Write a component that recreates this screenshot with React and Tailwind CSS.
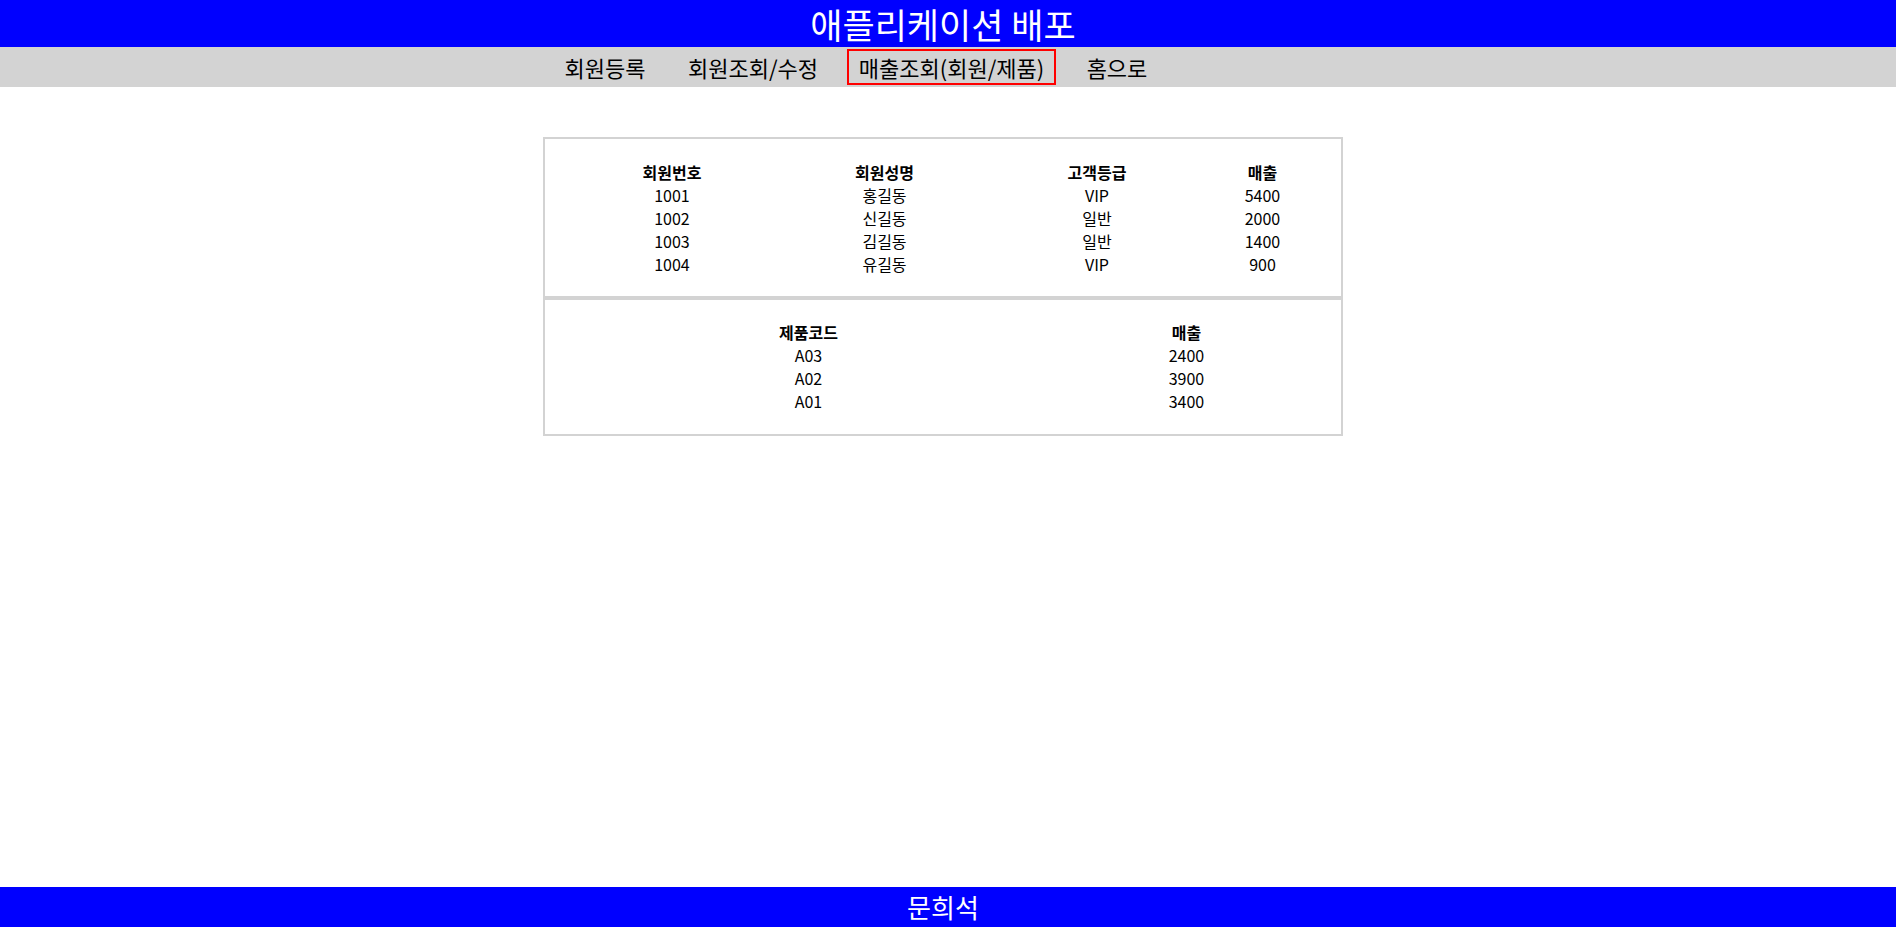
const NAV = [
  { label: '회원등록', w: 'w-[108px]' },
  { label: '회원조회/수정', w: 'w-[188px]' },
  { label: '매출조회(회원/제품)', w: 'w-[209px]', active: true },
  { label: '홈으로', w: 'w-[122px]' }
]

const MEMBER_SALES = [
  { id: '1001', name: '홍길동', grade: 'VIP', sales: '5400' },
  { id: '1002', name: '신길동', grade: '일반', sales: '2000' },
  { id: '1003', name: '김길동', grade: '일반', sales: '1400' },
  { id: '1004', name: '유길동', grade: 'VIP', sales: '900' }
]

const PRODUCT_SALES = [
  { code: 'A03', sales: '2400' },
  { code: 'A02', sales: '3900' },
  { code: 'A01', sales: '3400' }
]

const MEMBER_COLS = 'grid grid-cols-[214px_211px_214px_117px]'
const PRODUCT_COLS = 'grid grid-cols-[487px_269px]'

export default function App() {
  return (
    <div className="h-screen flex flex-col bg-white text-black font-['Noto_Sans_CJK_KR','Noto_Sans',sans-serif]">
      {/* Header */}
      <header className="h-[47px] flex items-center justify-center pr-[10px] bg-[#0000ff] text-white text-[35px] leading-none">
        애플리케이션 배포
      </header>

      {/* Nav */}
      <nav className="h-[40px] flex items-center justify-center pr-[167px] bg-[#d3d3d3] text-[22px] leading-none">
        {NAV.map((item) => (
          <a
            key={item.label}
            className={`h-[36px] flex items-center justify-center ${item.w} ${
              item.active ? 'border-2 border-[#ff0000]' : 'border-2 border-transparent'
            }`}
          >
            {item.label}
          </a>
        ))}
      </nav>

      {/* Sales tables */}
      <main className="flex justify-center pr-[10px] pt-[50px]">
        <section className="w-[800px] text-[16px] leading-none">
          <div className="border-2 border-[#d3d3d3] px-[20px] pt-[21px] pb-[21px]">
            <div className={`${MEMBER_COLS} h-[24px] items-center text-center font-bold`}>
              <span>회원번호</span>
              <span>회원성명</span>
              <span>고객등급</span>
              <span>매출</span>
            </div>
            {MEMBER_SALES.map((row) => (
              <div key={row.id} className={`${MEMBER_COLS} h-[22.75px] items-center text-center`}>
                <span>{row.id}</span>
                <span>{row.name}</span>
                <span>{row.grade}</span>
                <span>{row.sales}</span>
              </div>
            ))}
          </div>
          <div className="border-2 border-[#d3d3d3] px-[20px] pt-[20px] pb-[22px]">
            <div className={`${PRODUCT_COLS} h-[24px] items-center text-center font-bold`}>
              <span>제품코드</span>
              <span>매출</span>
            </div>
            {PRODUCT_SALES.map((row) => (
              <div key={row.code} className={`${PRODUCT_COLS} h-[22.75px] items-center text-center`}>
                <span>{row.code}</span>
                <span>{row.sales}</span>
              </div>
            ))}
          </div>
        </section>
      </main>

      {/* Footer */}
      <footer className="mt-auto h-[40px] flex items-center justify-center pr-[10px] bg-[#0000ff] text-white text-[26px] leading-none">
        문희석
      </footer>
    </div>
  )
}
